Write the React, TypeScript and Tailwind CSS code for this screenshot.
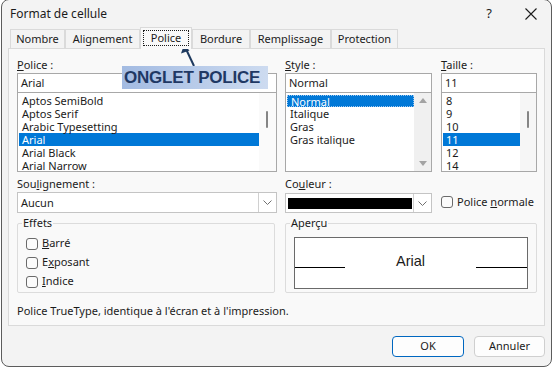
import React from "react";

const Chevron = () => (
  <svg width="9" height="5" viewBox="0 0 9 5">
    <polyline points="0.5,0.5 4.5,4.5 8.5,0.5" fill="none" stroke="#707070" strokeWidth="1" />
  </svg>
);

const Box = () => (
  <span className="w-[12px] h-[12px] rounded-[3px] border border-[#6a6a6a] bg-[#fbfbfb] shrink-0" />
);

const Tab = ({ w, label }: { w: string; label: string }) => (
  <div className={`${w} h-[19px] border border-b-0 border-[#dadada] bg-[#f3f3f3] flex items-center justify-center`}>
    {label}
  </div>
);

const Row = ({ text, sel }: { text: string; sel?: boolean }) => (
  <div className={`h-[13px] leading-[13px] pl-[3px] ${sel ? "bg-[#0078d7] text-white" : ""}`}>{text}</div>
);

export default function App() {
  return (
    <div className="w-[554px] h-[368px] bg-white overflow-hidden relative font-['Noto_Sans',sans-serif] text-[11px] text-[#1b1b1b]">
      <div className="ml-px -mt-px w-[551px] h-[368px] border border-[#5c5c5c] rounded-[8px] bg-[#f3f3f3] flex flex-col">
        {/* title bar */}
        <div className="h-[28px] flex items-center pl-[8px] pr-[14px] shrink-0">
          <span className="text-[12px]">Format de cellule</span>
          <span className="ml-auto text-[13px] mr-[33px]">?</span>
          <svg width="12" height="12" viewBox="0 0 12 12">
            <path d="M0.5 0.5 L11.5 11.5 M11.5 0.5 L0.5 11.5" stroke="#1b1b1b" strokeWidth="1.1" />
          </svg>
        </div>
        {/* tabs */}
        <div className="h-[20px] flex items-end pl-[8px] shrink-0 relative z-10">
          <Tab w="w-[55px]" label="Nombre" />
          <Tab w="w-[75px]" label="Alignement" />
          <div className="w-[52px] h-[22px] -mb-px border border-b-0 border-[#dadada] bg-[#f9f9f9] flex items-start justify-center pt-[2px]">
            <span className="w-[46px] h-[16px] border border-dotted border-[#1b1b1b] flex items-center justify-center">Police</span>
          </div>
          <Tab w="w-[58px]" label="Bordure" />
          <Tab w="w-[81px]" label="Remplissage" />
          <Tab w="w-[67px]" label="Protection" />
        </div>
        {/* panel */}
        <div className="ml-[6px] w-[537px] h-[278px] border border-[#dadada] bg-[#f9f9f9] pt-[8px] pl-[8px] shrink-0 flex flex-col">
          {/* font lists */}
          <div className="flex">
            <div className="w-[260px] flex flex-col">
              <div className="h-[16px] leading-[16px]"><u>P</u>olice :</div>
              <div className="h-[20px] border border-[#a8a8a8] bg-white pl-[3px] leading-[18px]">Arial</div>
              <div className="h-[79px] border border-[#a8a8a8] border-t-0 bg-white flex pl-px">
                <div className="w-[240px] pt-px">
                  <Row text="Aptos SemiBold" />
                  <Row text="Aptos Serif" />
                  <Row text="Arabic Typesetting" />
                  <Row text="Arial" sel />
                  <Row text="Arial Black" />
                  <Row text="Arial Narrow" />
                </div>
                <div className="flex-1 bg-[#fafafa] flex justify-start pl-[7px] pt-[18px]">
                  <div className="w-[2px] h-[17px] rounded bg-[#858585]" />
                </div>
              </div>
            </div>
            <div className="w-[147px] ml-[8px] flex flex-col">
              <div className="h-[16px] leading-[16px]"><u>S</u>tyle :</div>
              <div className="h-[20px] border border-[#a8a8a8] bg-white pl-[3px] leading-[18px]">Normal</div>
              <div className="h-[79px] border border-[#a8a8a8] border-t-0 bg-white flex pl-px">
                <div className="w-[127px] pt-[2px]">
                  <div className="h-[12px] leading-[12px] pl-[3px] bg-[#0078d7] text-white border border-dotted border-[#9cc7ef]">Normal</div>
                  <Row text="Italique" />
                  <Row text="Gras" />
                  <Row text="Gras italique" />
                </div>
                <div className="flex-1 bg-[#f0f0f0] flex flex-col items-center justify-between py-[5px]">
                  <svg width="8" height="5" viewBox="0 0 8 5"><polygon points="0,5 8,5 4,0" fill="#a3a3a3" /></svg>
                  <svg width="8" height="5" viewBox="0 0 8 5"><polygon points="0,0 8,0 4,5" fill="#a3a3a3" /></svg>
                </div>
              </div>
            </div>
            <div className="w-[96px] ml-[9px] flex flex-col">
              <div className="h-[16px] leading-[16px]"><u>T</u>aille :</div>
              <div className="h-[20px] border border-[#a8a8a8] bg-white pl-[3px] leading-[18px]">11</div>
              <div className="h-[79px] border border-[#a8a8a8] border-t-0 bg-white flex pl-px">
                <div className="w-[77px] pt-px">
                  <Row text="8" />
                  <Row text="9" />
                  <Row text="10" />
                  <Row text="11" sel />
                  <Row text="12" />
                  <Row text="14" />
                </div>
                <div className="flex-1 bg-[#f6f6f6] flex justify-start pl-[7px] pt-[18px]">
                  <div className="w-[2px] h-[17px] rounded bg-[#858585]" />
                </div>
              </div>
            </div>
          </div>
          {/* underline / color */}
          <div className="flex mt-[4px]">
            <div className="w-[260px] flex flex-col">
              <div className="h-[15px] leading-[15px]">Sou<u>l</u>ignement :</div>
              <div className="mt-px h-[21px] border border-[#c4c4c4] bg-white flex">
                <div className="flex-1 pl-[3px] leading-[19px]">Aucun</div>
                <div className="w-[18px] border-l border-[#d0d0d0] flex items-center justify-center"><Chevron /></div>
              </div>
            </div>
            <div className="w-[147px] ml-[8px] flex flex-col">
              <div className="h-[15px] leading-[15px]">Co<u>u</u>leur :</div>
              <div className="mt-[2px] h-[20px] border border-[#c4c4c4] bg-white flex">
                <div className="flex-1 flex items-center pl-[2px] pr-[1px]">
                  <div className="w-full h-[11px] bg-black" />
                </div>
                <div className="w-[18px] border-l border-[#d0d0d0] flex items-center justify-center"><Chevron /></div>
              </div>
            </div>
            <div className="ml-[9px] flex items-end pb-[3px]">
              <div className="flex items-center gap-[4px]">
                <Box />
                <span>Police <u>n</u>ormale</span>
              </div>
            </div>
          </div>
          {/* groups */}
          <div className="flex mt-[3px]">
            <fieldset className="w-[258px] h-[77px] border border-[#dcdcdc] rounded-[2px] px-[4px] flex flex-col">
              <legend className="px-px leading-[14px]">Effets</legend>
              <div className="flex flex-col gap-[6px] pl-[4px] pt-[7px]">
                <div className="flex items-center gap-[4px] h-[13px]"><Box /><span><u>B</u>arré</span></div>
                <div className="flex items-center gap-[4px] h-[13px]"><Box /><span>E<u>x</u>posant</span></div>
                <div className="flex items-center gap-[4px] h-[13px]"><Box /><span><u>I</u>ndice</span></div>
              </div>
            </fieldset>
            <fieldset className="ml-[10px] w-[252px] h-[77px] border border-[#dcdcdc] rounded-[2px] px-[4px]">
              <legend className="px-px leading-[14px]">Aperçu</legend>
              <div className="ml-[4px] mt-[7px] w-[234px] h-[52px] border border-[#6a6a6a] bg-white flex items-end pb-[20px]">
                <div className="w-[50px] h-px bg-black" />
                <div className="flex-1 text-center font-['Liberation_Sans',Arial,sans-serif] text-[14.5px] leading-[15px] -mb-[1px]">Arial</div>
                <div className="w-[51px] h-px bg-black" />
              </div>
            </fieldset>
          </div>
          <div className="mt-[10px] leading-[15px]">Police TrueType, identique à l'écran et à l'impression.</div>
        </div>
        {/* buttons */}
        <div className="flex justify-end gap-[10px] pr-[6px] mt-[10px]">
          <button className="w-[72px] h-[21px] rounded-[4px] border border-[#0067c0] bg-[#fdfdfd] text-[11px]">OK</button>
          <button className="w-[71px] h-[21px] rounded-[4px] border border-[#cfcfcf] bg-[#fdfdfd] text-[11px]">Annuler</button>
        </div>
      </div>

      {/* annotation overlay */}
      <svg className="absolute left-[178px] top-[44px]" width="20" height="24" viewBox="0 0 20 24">
        <line x1="16" y1="22" x2="8" y2="5" stroke="#1f3a5f" strokeWidth="2" />
        <polygon points="6,1 3,9.5 11.5,6.5" fill="#1f3a5f" />
      </svg>
      <div className="absolute left-[122px] top-[66px] w-[146px] h-[23px] bg-linear-to-r from-[#a3bbe2] to-[#cddbf0] flex items-center pl-[2px]">
        <span className="font-['Liberation_Sans',Arial,sans-serif] font-bold text-[17px] leading-[17px] text-[#1f3864] tracking-[-0.2px]">ONGLET POLICE</span>
      </div>
    </div>
  );
}
